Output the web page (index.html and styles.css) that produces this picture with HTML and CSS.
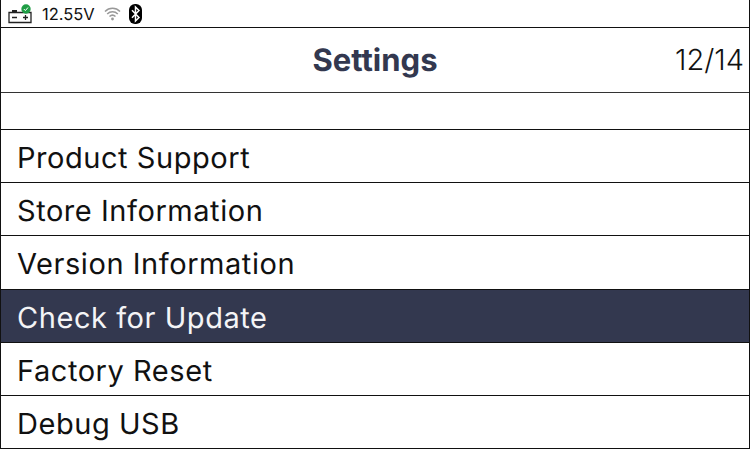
FILE: index.html
```html
<!DOCTYPE html>
<html lang="en">
<head>
    <meta charset="UTF-8">
    <title>Settings</title>
    <link rel="stylesheet" href="styles.css">
</head>
<body>
    <div class="screen">
        <div class="status-bar">
            <svg class="battery-icon" width="25" height="20" viewBox="0 0 25 20">
                <path d="M1 8.500h22v10H1z" fill="none" stroke="#222" stroke-width="1.300"/>
                <path d="M4 7h5M15 7h5" stroke="#222" stroke-width="1.800"/>
                <path d="M4 13.500h5M15 13.500h5M17.500 11v5" stroke="#222" stroke-width="1.300"/>
                <circle cx="18" cy="5" r="4.700" fill="#1f9d45"/>
                <path d="M15.800 5l1.600 1.600 2.600-3.100" fill="none" stroke="#fff" stroke-width="1"/>
            </svg>
            <span class="voltage">12.55V</span>
            <svg class="wifi-icon" width="17" height="15" viewBox="0 0 17 15">
                <path d="M1 5.500c4.200-4.300 10.800-4.300 15 0M3.200 8c3-3 7.600-3 10.600 0M5.500 10.500c1.700-1.600 4.300-1.600 6 0" fill="none" stroke="#999" stroke-width="1.500"/>
                <circle cx="8.500" cy="13" r="1.400" fill="#999"/>
            </svg>
            <svg class="bt-icon" width="13" height="20" viewBox="0 0 13 20">
                <rect width="13" height="20" rx="6" fill="#000"/>
                <path d="M3 6.200l7 7.300-3.500 3.500V3l3.500 3.500-7 7.300" fill="none" stroke="#fff" stroke-width="1.500"/>
            </svg>
        </div>
        <div class="title-bar">
            <h1 class="title">Settings</h1>
            <span class="page-count">12/14</span>
        </div>
        <div class="blank-row"></div>
        <ul class="menu">
            <li class="menu-item">Product Support</li>
            <li class="menu-item">Store Information</li>
            <li class="menu-item">Version Information</li>
            <li class="menu-item selected">Check for Update</li>
            <li class="menu-item">Factory Reset</li>
            <li class="menu-item">Debug USB</li>
        </ul>
    </div>
</body>
</html>
```

FILE: styles.css
```css
html, body {
    margin: 0;
    height: 100%;
    background-color: #fff;
}
.screen {
    box-sizing: border-box;
    width: 750px;
    height: 449px;
    border-left: 1px solid #111;
    border-right: 1px solid #111;
    border-bottom: 1px solid #111;
    display: flex;
    flex-direction: column;
    font-family: Inter, "Liberation Sans", sans-serif;
    color: #111;
    text-rendering: geometricPrecision;
}
.status-bar {
    height: 27px;
    display: flex;
    align-items: center;
    padding-left: 7px;
    border-bottom: 1px solid #111;
    flex-shrink: 0;
}
.battery-icon {
    margin-right: 9px;
}
.voltage {
    font-size: 16.500px;
    margin-right: 9px;
}
.wifi-icon {
    margin-right: 8px;
}
.title-bar {
    height: 64px;
    display: flex;
    align-items: center;
    justify-content: center;
    position: relative;
    border-bottom: 1px solid #333;
    flex-shrink: 0;
}
.title {
    margin: 0;
    font-size: 31px;
    font-weight: 700;
    color: #33384f;
}
.page-count {
    position: absolute;
    right: 5px;
    top: 14px;
    font-size: 29px;
    font-weight: 300;
}
.blank-row {
    height: 36px;
    border-bottom: 1px solid #111;
    flex-shrink: 0;
}
.menu {
    list-style: none;
    margin: 0;
    padding: 0;
    flex-grow: 1;
    display: flex;
    flex-direction: column;
}
.menu-item {
    flex: 1;
    display: flex;
    align-items: center;
    padding-left: 16px;
    padding-top: 3px;
    font-size: 29px;
    letter-spacing: 0.55px;
    border-bottom: 1px solid #111;
}
.menu-item:last-child {
    border-bottom: none;
}
.selected {
    background-color: #33384f;
    color: #f4f4f6;
}
```
